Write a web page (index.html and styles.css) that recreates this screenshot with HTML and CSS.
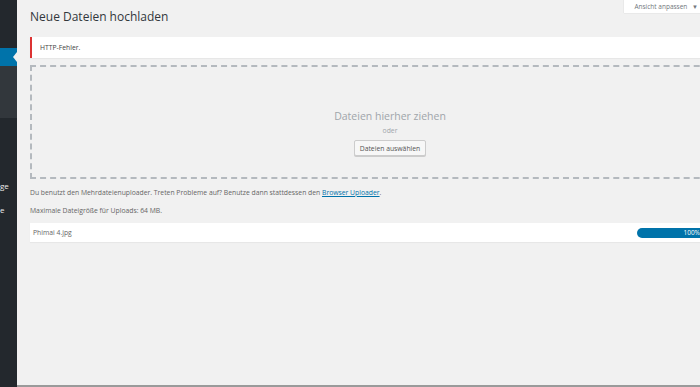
FILE: index.html
```html
<!DOCTYPE html>
<html lang="de">
  <head>
    <meta charset="UTF-8" />
    <meta name="viewport" content="width=device-width, initial-scale=1.0" />
    <title>Neue Dateien hochladen</title>
    <link rel="stylesheet" href="styles.css">
  </head>
  <body>
    <div class="admin">
      <nav class="sidebar">
        <div class="menu-top"></div>
        <div class="menu-current"><span class="notch"></span></div>
        <div class="submenu"></div>
        <div class="menu-rest">
          <span class="menu-item">ge</span>
          <span class="menu-item">e</span>
        </div>
      </nav>

      <main class="content">
        <div class="header">
          <h1>Neue Dateien hochladen</h1>
          <button class="screen-options">Ansicht anpassen <span class="arrow">&#9660;</span></button>
        </div>

        <div class="wide">
          <div class="notice">HTTP-Fehler.</div>

          <div class="drop-zone">
            <p class="drop-title">Dateien hierher ziehen</p>
            <p class="drop-or">oder</p>
            <button class="select-btn">Dateien auswählen</button>
          </div>

          <p class="info">
            Du benutzt den Mehrdateienuploader. Treten Probleme auf? Benutze dann stattdessen den
            <a href="#">Browser Uploader</a>.
          </p>
          <p class="info">Maximale Dateigröße für Uploads: 64 MB.</p>
        </div>

        <div class="file-row">
          <span class="filename">Phimai 4.jpg</span>
          <div class="progress"><span>100%</span></div>
        </div>
      </main>
    </div>
  </body>
</html>
```

FILE: styles.css
```css
html,
body {
  margin: 0;
  height: 100%;
  overflow: hidden;
}
body {
  font-family: 'Open Sans', 'Noto Sans', sans-serif;
  background-color: #f1f1f1;
  color: #444;
}
.admin {
  display: flex;
  height: 387px;
}
.sidebar {
  width: 17px;
  flex: none;
  background-color: #23282d;
  display: flex;
  flex-direction: column;
  overflow: hidden;
}
.menu-top {
  height: 48px;
}
.menu-current {
  height: 18px;
  background-color: #0073aa;
  position: relative;
}
.notch {
  position: absolute;
  right: 0;
  top: 4px;
  border-top: 5px solid transparent;
  border-bottom: 5px solid transparent;
  border-right: 4px solid #f1f1f1;
}
.submenu {
  height: 52px;
  background-color: #32373c;
}
.menu-rest {
  display: flex;
  flex-direction: column;
  align-items: flex-start;
  padding-top: 62px;
  gap: 12px;
}
.menu-item {
  color: #eee;
  font-size: 8px;
  line-height: 12px;
  white-space: nowrap;
}
.content {
  flex: 1;
  min-width: 0;
  padding-left: 13px;
  border-bottom: 2px solid #9a9a9a;
}
.header {
  display: flex;
  justify-content: space-between;
  align-items: flex-start;
  margin-bottom: 11px;
}
h1 {
  margin: 8px 0 0;
  font-size: 12px;
  line-height: 18px;
  font-weight: 400;
  color: #32373c;
}
.screen-options {
  font-family: inherit;
  font-size: 6.5px;
  color: #72777c;
  background-color: #fff;
  border: none;
  box-shadow: 0 0 1px rgba(0, 0, 0, 0.2);
  height: 13px;
  padding: 0 3px 0 10px;
  margin-right: -1px;
}
.arrow {
  font-size: 6px;
  margin-left: 3px;
  color: #72777c;
}
.wide {
  width: 720px;
}
.notice {
  background-color: #fff;
  border-left: 2px solid #dc3232;
  box-shadow: 0 1px 1px rgba(0, 0, 0, 0.04);
  height: 21px;
  line-height: 21px;
  padding-left: 8px;
  font-size: 6.8px;
  color: #444;
}
.drop-zone {
  margin-top: 7px;
  height: 110px;
  border: 2px dashed #b4b9be;
  display: flex;
  flex-direction: column;
  align-items: center;
}
.drop-title {
  margin: 42px 0 0;
  font-size: 10.5px;
  line-height: 15px;
  color: #a0a5aa;
}
.drop-or {
  margin: 0;
  font-size: 6.8px;
  line-height: 14px;
  color: #a0a5aa;
}
.select-btn {
  margin-top: 2px;
  font-family: inherit;
  font-size: 6.8px;
  color: #555;
  background-color: #f7f7f7;
  border: 1px solid #ccc;
  border-radius: 2px;
  height: 16px;
  padding: 0 5px;
  box-shadow: 0 1px 0 #ccc;
}
.info {
  margin: 0;
  font-size: 6.8px;
  line-height: 18px;
  color: #666;
}
.info:first-of-type {
  margin-top: 5px;
}
.info a {
  color: #0073aa;
}
.file-row {
  margin-top: 3px;
  height: 19px;
  background-color: #fff;
  box-shadow: 0 1px 1px rgba(0, 0, 0, 0.04);
  display: flex;
  align-items: center;
  justify-content: space-between;
  margin-right: -4px;
}
.filename {
  padding-left: 3px;
  font-size: 6.8px;
  color: #666;
}
.progress {
  width: 67px;
  height: 10px;
  background-color: #0073aa;
  border-radius: 5px 0 0 5px;
  color: #fff;
  font-size: 6.5px;
  line-height: 10px;
  text-align: right;
  padding-right: 4px;
  box-sizing: border-box;
}
```
